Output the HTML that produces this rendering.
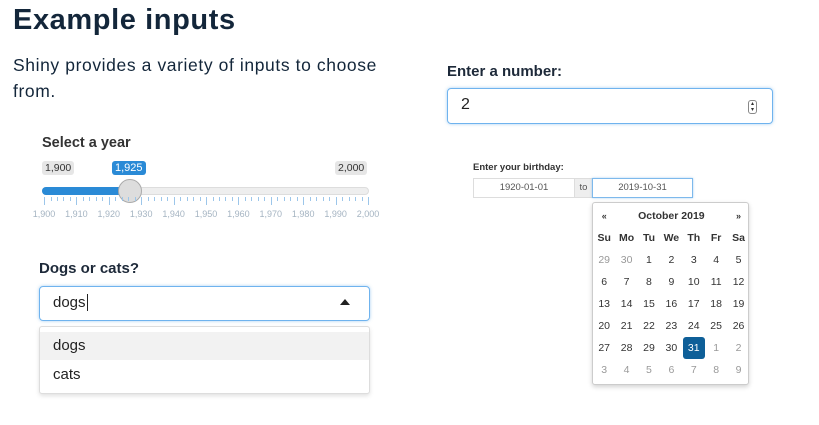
<!DOCTYPE html>
<html><head><style>
body{margin:0;width:819px;height:425px;background:#fff;font-family:"Liberation Sans",sans-serif;position:relative;overflow:hidden;color:#1d2939}
.a{position:absolute}
.cal td{width:22.4px;height:22px;text-align:center;font-size:10.5px;color:#333;padding:0}
.cal .o{color:#999}
.cal th{font-size:10.5px;font-weight:bold;color:#333;height:22px;padding:0}
.tk{position:absolute;top:197px;width:1px;background:#9cc6ea}
.tl{position:absolute;top:209px;font-size:9px;color:#a5b4c2;width:30px;text-align:center}
</style></head><body>
<div class="a" style="left:13px;top:4px;font-size:29px;font-weight:bold;color:#13263a;letter-spacing:0.6px">Example inputs</div>
<div class="a" style="left:13px;top:52px;font-size:17.5px;line-height:26px;width:385px;color:#13263a;letter-spacing:0.6px">Shiny provides a variety of inputs to choose from.</div>

<div class="a" style="left:42px;top:135px;font-size:14.5px;font-weight:bold;color:#333">Select a year</div>
<div class="a" style="left:42px;top:161px;background:#e6e6e6;border-radius:3px;font-size:10.5px;color:#333;padding:1px 3px">1,900</div>
<div class="a" style="left:112px;top:161px;background:#2a8ad6;border-radius:3px;font-size:11px;color:#fff;padding:1px 3px">1,925</div>
<div class="a" style="left:335px;top:161px;background:#e6e6e6;border-radius:3px;font-size:10.5px;color:#333;padding:1px 3px">2,000</div>
<div class="a" style="left:42px;top:187px;width:327px;height:8px;border-radius:4px;background:#eee;border:1px solid #ddd;box-sizing:border-box"></div>
<div class="a" style="left:42px;top:187px;width:88px;height:8px;border-radius:4px 0 0 4px;background:#2a8ad6"></div>
<div class="a" style="left:118px;top:179px;width:22px;height:22px;border-radius:50%;background:#ddd;border:1px solid #aaa"></div>
<div id="ticks"></div>
<script>
var h='';for(var i=0;i<=50;i++){var x=44+i*6.48;var big=i%5==0;h+='<div class="tk" style="left:'+x.toFixed(1)+'px;height:'+(big?8:4)+'px"></div>';}
for(var i=0;i<=10;i++){var x=44+i*32.4;h+='<div class="tl" style="left:'+(x-15).toFixed(1)+'px">'+(1900+i*10).toString().replace(/^(\d)/,'$1,')+'</div>';}
document.getElementById('ticks').innerHTML=h;
</script>

<div class="a" style="left:39px;top:260px;font-size:15px;font-weight:bold;color:#1d2939">Dogs or cats?</div>
<div class="a" style="left:39px;top:286px;width:331px;height:35px;border:1px solid #6fb3ee;border-radius:4px;box-sizing:border-box;box-shadow:0 0 3px rgba(80,160,230,.5)"></div>
<div class="a" style="left:53px;top:294px;font-size:15px;color:#222">dogs<span style="border-left:1px solid #222;margin-left:1px"></span></div>
<div class="a" style="left:340px;top:299px;width:0;height:0;border-left:5px solid transparent;border-right:5px solid transparent;border-bottom:6px solid #222"></div>
<div class="a" style="left:39px;top:326px;width:331px;height:68px;border:1px solid #ddd;border-radius:3px;box-sizing:border-box;box-shadow:0 2px 4px rgba(0,0,0,.12);background:#fff"></div>
<div class="a" style="left:40px;top:332px;width:329px;height:28px;background:#f2f2f2"></div>
<div class="a" style="left:53px;top:337px;font-size:15px;color:#222">dogs</div>
<div class="a" style="left:53px;top:366px;font-size:15px;color:#222">cats</div>

<div class="a" style="left:447px;top:63px;font-size:15px;font-weight:bold;color:#1d2939">Enter a number:</div>
<div class="a" style="left:447px;top:88px;width:326px;height:36px;border:1px solid #6fb3ee;border-radius:4px;box-sizing:border-box;box-shadow:0 0 3px rgba(80,160,230,.5)"></div>
<div class="a" style="left:461px;top:96px;font-size:16px;color:#222">2</div>
<div class="a" style="left:748px;top:100px;width:7px;height:12px;border:1px solid #888;border-radius:3px;font-size:6px;line-height:6px;text-align:center;color:#333">▴<br>▾</div>

<div class="a" style="left:473px;top:162px;font-size:9.5px;font-weight:bold;color:#333">Enter your birthday:</div>
<div class="a" style="left:473px;top:178px;width:102px;height:20px;border:1px solid #ddd;box-sizing:border-box;font-size:9.5px;color:#555;text-align:center;line-height:18px">1920-01-01</div>
<div class="a" style="left:575px;top:178px;width:17px;height:20px;background:#eee;border-top:1px solid #ddd;border-bottom:1px solid #ddd;box-sizing:border-box;font-size:9.5px;color:#555;text-align:center;line-height:18px">to</div>
<div class="a" style="left:592px;top:178px;width:101px;height:20px;border:1px solid #7db9ec;box-sizing:border-box;font-size:9.5px;color:#555;text-align:center;line-height:18px;box-shadow:0 0 2px rgba(80,160,230,.5)">2019-10-31</div>
<div class="a" style="left:592px;top:202px;width:157px;height:183px;border:1px solid #ccc;border-radius:3px;box-sizing:border-box;box-shadow:0 2px 5px rgba(0,0,0,.18);background:#fff"></div>
<table class="a cal" style="left:593px;top:205px;border-collapse:collapse">
<tr><th style="font-size:9px">«</th><th colspan="5">October 2019</th><th style="font-size:9px">»</th></tr>
<tr><th>Su</th><th>Mo</th><th>Tu</th><th>We</th><th>Th</th><th>Fr</th><th>Sa</th></tr>
<tr><td class="o">29</td><td class="o">30</td><td>1</td><td>2</td><td>3</td><td>4</td><td>5</td></tr>
<tr><td>6</td><td>7</td><td>8</td><td>9</td><td>10</td><td>11</td><td>12</td></tr>
<tr><td>13</td><td>14</td><td>15</td><td>16</td><td>17</td><td>18</td><td>19</td></tr>
<tr><td>20</td><td>21</td><td>22</td><td>23</td><td>24</td><td>25</td><td>26</td></tr>
<tr><td>27</td><td>28</td><td>29</td><td>30</td><td style="background:#0e5f98;color:#fff;border-radius:3px">31</td><td class="o">1</td><td class="o">2</td></tr>
<tr><td class="o">3</td><td class="o">4</td><td class="o">5</td><td class="o">6</td><td class="o">7</td><td class="o">8</td><td class="o">9</td></tr>
</table>
</body></html>
